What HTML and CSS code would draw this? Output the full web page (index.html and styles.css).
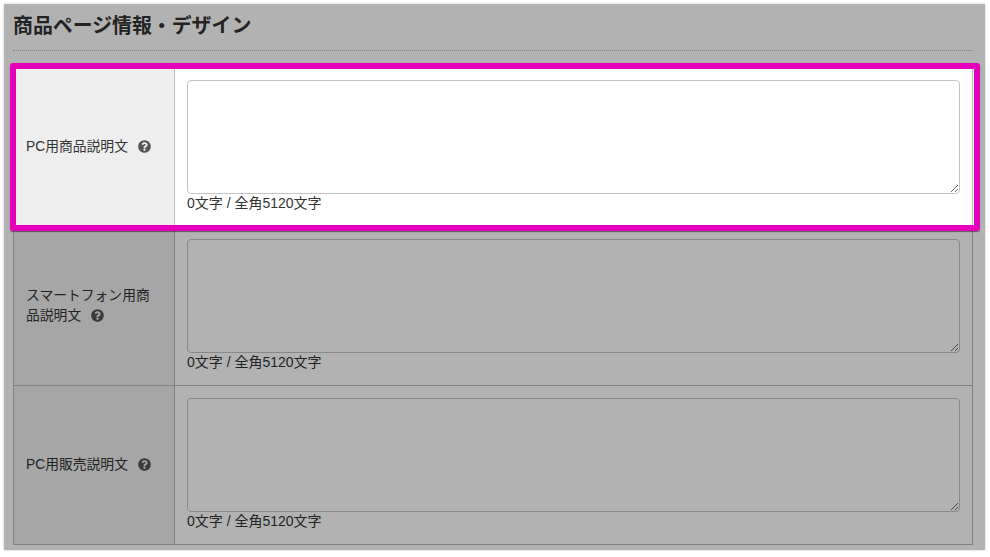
FILE: index.html
```html
<!DOCTYPE html>
<html lang="ja">
<head>
  <meta charset="UTF-8" />
  <title>商品ページ情報・デザイン</title>
  <link rel="stylesheet" href="styles.css">
</head>
<body>
  <section class="panel">
    <h2 class="panel-title">商品ページ情報・デザイン</h2>

    <div class="form-table">
      <div class="form-row is-active">
        <div class="form-label">
          <span>PC用商品説明文<svg class="help-icon" viewBox="0 0 512 512"><use href="#question" /></svg></span>
        </div>
        <div class="form-field">
          <textarea></textarea>
          <div class="char-count">0文字 / 全角5120文字</div>
        </div>
      </div>

      <div class="form-row">
        <div class="form-label">
          <span>スマートフォン用商品説明文<svg class="help-icon" viewBox="0 0 512 512"><use href="#question" /></svg></span>
        </div>
        <div class="form-field">
          <textarea></textarea>
          <div class="char-count">0文字 / 全角5120文字</div>
        </div>
      </div>

      <div class="form-row">
        <div class="form-label">
          <span>PC用販売説明文<svg class="help-icon" viewBox="0 0 512 512"><use href="#question" /></svg></span>
        </div>
        <div class="form-field">
          <textarea></textarea>
          <div class="char-count">0文字 / 全角5120文字</div>
        </div>
      </div>
    </div>

    <div class="dim-layer"></div>
  </section>

  <svg class="icon-defs" width="0" height="0">
    <symbol id="question" viewBox="0 0 512 512">
      <path d="M504 256c0 136.997-111.043 248-248 248S8 392.997 8 256C8 119.083 119.043 8 256 8s248 111.083 248 248zM262.655 90c-54.497 0-89.255 22.957-116.549 63.758-3.536 5.286-2.353 12.415 2.715 16.258l34.699 26.31c5.205 3.947 12.621 3.008 16.665-2.122 17.864-22.658 30.113-35.797 57.303-35.797 20.429 0 45.698 13.148 45.698 32.958 0 14.976-12.363 22.667-32.534 33.976C247.128 238.528 216 254.941 216 296v4c0 6.627 5.373 12 12 12h56c6.627 0 12-5.373 12-12v-1.333c0-28.462 83.186-29.647 83.186-106.667 0-58.002-60.165-102-116.531-102zM256 338c-25.365 0-46 20.635-46 46 0 25.364 20.635 46 46 46s46-20.636 46-46c0-25.365-20.635-46-46-46z" />
    </symbol>
  </svg>
</body>
</html>
```

FILE: styles.css
```css
html, body {
  margin: 0;
  padding: 0;
  background: #fff;
}

body {
  padding: 4px 5px 7px 4px;
  color: #333;
  font-family: "Liberation Sans", "Noto Sans CJK JP", sans-serif;
  font-size: 13.8px;
  line-height: 20px;
  overflow: hidden;
}

.panel {
  position: relative;
  box-sizing: border-box;
  width: 981px;
  height: 546px;
  padding: 0 12px 5px 9px;
  background: #fff;
  box-shadow: 0 0 2px rgba(0, 0, 0, .25);
}

.panel-title {
  height: 46px;
  margin: 0 0 16px;
  border-bottom: 1px dotted #bbb;
  color: #333;
  font-size: 19.9px;
  font-weight: bold;
  line-height: 44px;
}

.form-table {
  border-top: 1px solid #bbb;
}

.form-row {
  display: flex;
  position: relative;
  height: 158px;
  border: 1px solid #bbb;
  border-top: none;
  background: #fff;
}

.form-label {
  display: flex;
  align-items: center;
  box-sizing: border-box;
  width: 161px;
  padding: 0 22px 0 12px;
  border-right: 1px solid #bbb;
  background: #eee;
}

.form-field {
  flex: 1;
  padding: 12px 12px 0;
}

.form-field textarea {
  display: block;
  box-sizing: border-box;
  width: 773px;
  height: 114px;
  margin: 0;
  border: 1px solid #c4c4c4;
  border-radius: 4px;
  background: #fff;
  outline: none;
}

.char-count {
  font-size: 14px;
  line-height: 18px;
}

.help-icon {
  width: 13px;
  height: 13px;
  margin-left: 10px;
  fill: #555;
  vertical-align: -2px;
}

.icon-defs {
  position: absolute;
}

/* grey layer over the whole panel, the active row stays above it */
.dim-layer {
  position: absolute;
  inset: 0;
  z-index: 1;
  background: rgba(0, 0, 0, .3);
}

.form-row.is-active {
  z-index: 2;
  box-shadow: 1px 0 0 #fff;
}

.form-row.is-active::after {
  content: "";
  position: absolute;
  top: -5px;
  left: -4px;
  right: -8px;
  bottom: -5px;
  border: 6px solid #e600bc;
  border-radius: 3px;
  box-shadow: 0 1px 1px rgba(0, 0, 0, .5);
  pointer-events: none;
}
```
